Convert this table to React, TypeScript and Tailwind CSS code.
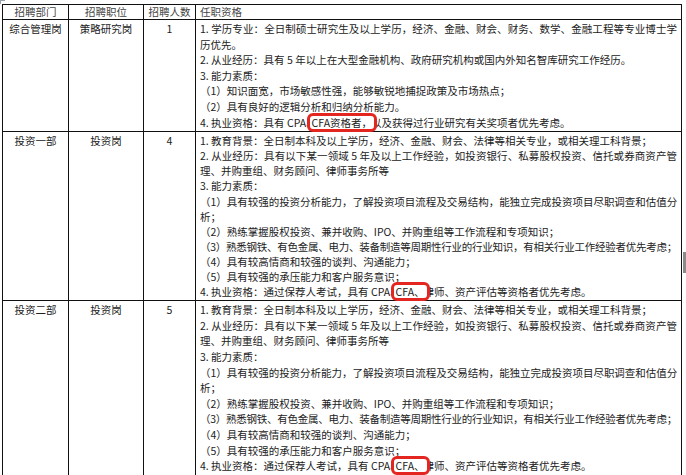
import type { ReactNode } from 'react'

// highlighted words (red annotation box drawn over the text)
function Mark({ children }: { children: ReactNode }) {
  return (
    <span className="relative z-10 -ml-[7px] -mr-[3px] inline-block rounded-[3px] bg-white px-[2px] leading-[13px] outline-[3px] outline-[#e3261f] outline-solid">
      {children}
    </span>
  )
}

type Line = { content: ReactNode; full?: boolean; tight?: boolean }

interface Row {
  dept: string
  pos: string
  num: string
  leading: string
  lines: Line[]
}

const investLines: Line[] = [
  { content: '1. 教育背景：全日制本科及以上学历，经济、金融、财会、法律等相关专业，或相关理工科背景；' },
  { content: '2. 从业经历：具有以下某一领域 5 年及以上工作经验，如投资银行、私募股权投资、信托或券商资产管', full: true },
  { content: '理、并购重组、财务顾问、律师事务所等' },
  { content: '3. 能力素质：' },
  { content: '（1）具有较强的投资分析能力，了解投资项目流程及交易结构，能独立完成投资项目尽职调查和估值分', full: true, tight: true },
  { content: '析；' },
  { content: '（2）熟练掌握股权投资、兼并收购、IPO、并购重组等工作流程和专项知识；' },
  { content: '（3）熟悉钢铁、有色金属、电力、装备制造等周期性行业的行业知识，有相关行业工作经验者优先考虑；', tight: true },
  { content: '（4）具有较高情商和较强的谈判、沟通能力；' },
  { content: '（5）具有较强的承压能力和客户服务意识；' },
  {
    content: (
      <>
        4. 执业资格：通过保荐人考试，具有 CPA、<Mark>CFA、</Mark>律师、资产评估等资格者优先考虑。
      </>
    ),
  },
]

const rows: Row[] = [
  {
    dept: '综合管理岗',
    pos: '策略研究岗',
    num: '1',
    leading: 'leading-[15.6px]',
    lines: [
      { content: '1. 学历专业：全日制硕士研究生及以上学历，经济、金融、财会、财务、数学、金融工程等专业博士学', full: true },
      { content: '历优先。' },
      { content: '2. 从业经历：具有 5 年以上在大型金融机构、政府研究机构或国内外知名智库研究工作经历。' },
      { content: '3. 能力素质：' },
      { content: '（1）知识面宽，市场敏感性强，能够敏锐地捕捉政策及市场热点；' },
      { content: '（2）具有良好的逻辑分析和归纳分析能力。' },
      {
        content: (
          <>
            4. 执业资格：具有 CPA、<Mark>CFA资格者，</Mark>以及获得过行业研究有关奖项者优先考虑。
          </>
        ),
      },
    ],
  },
  { dept: '投资一部', pos: '投资岗', num: '4', leading: 'leading-[15.1px]', lines: investLines },
  { dept: '投资二部', pos: '投资岗', num: '5', leading: 'leading-[15.6px]', lines: investLines },
]

const cell = 'border-r border-b border-[#111]'

export default function App() {
  return (
    <div className="relative h-[475px] w-[686px] overflow-hidden bg-white pl-[2px] pt-[4px] font-['Noto_Sans_CJK_SC','Noto_Sans',sans-serif] text-[10.5px] text-[#222]">
      {/* little corner mark of the source sheet */}
      <div className="absolute left-0 top-0 h-[4px] w-[5px] border-l border-t border-gray-400" />
      {/* grey bit at the right edge */}
      <div className="absolute right-0 top-[252px] h-[21px] w-[3px] bg-[#8a8a8a]" />

      <div className="grid w-[680px] grid-cols-[66px_75px_52px_486px] border-l border-t border-[#111]">
        {/* header */}
        <div className={`${cell} h-[15px] text-center leading-[14px] text-[#444]`}>招聘部门</div>
        <div className={`${cell} h-[15px] text-center leading-[14px] text-[#444]`}>招聘职位</div>
        <div className={`${cell} h-[15px] text-center leading-[14px] text-[#444]`}>招聘人数</div>
        <div className={`${cell} h-[15px] pl-[4px] leading-[14px] text-[#444]`}>任职资格</div>

        {rows.map((row) => (
          <div key={row.dept} className="contents">
            <div className={`${cell} ${row.leading} pt-[1px] text-center`}>{row.dept}</div>
            <div className={`${cell} ${row.leading} pt-[1px] text-center`}>{row.pos}</div>
            <div className={`${cell} ${row.leading} pt-[1px] text-center`}>{row.num}</div>
            <div className={`${cell} ${row.leading} px-[4px] pb-[1px] pt-[1px]`}>
              {row.lines.map((line, i) => (
                <div
                  key={i}
                  className={[
                    'whitespace-nowrap',
                    line.full ? 'text-justify [text-align-last:justify]' : '',
                    line.tight ? 'tracking-[-0.25px]' : '',
                  ].join(' ')}
                >
                  {line.content}
                </div>
              ))}
            </div>
          </div>
        ))}

        {/* next row, only its top edge is in view */}
        <div className={`${cell} h-[20px]`} />
        <div className={`${cell} h-[20px]`} />
        <div className={`${cell} h-[20px]`} />
        <div className={`${cell} h-[20px]`} />
      </div>
    </div>
  )
}
